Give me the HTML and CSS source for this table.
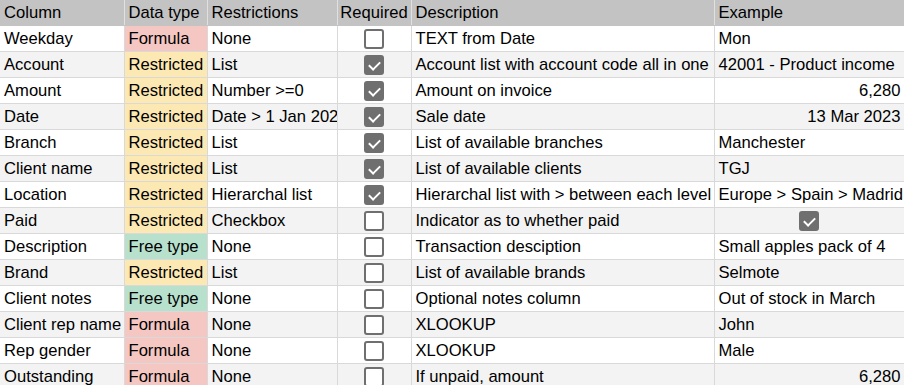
FILE: index.html
```html
<!DOCTYPE html>
<html lang="en">
<head>
    <meta charset="UTF-8">
    <title>Columns</title>
    <link rel="stylesheet" href="styles.css">
</head>
<body>
    <table class="sheet">
        <colgroup>
            <col class="c-col">
            <col class="c-type">
            <col class="c-restr">
            <col class="c-req">
            <col class="c-desc">
            <col class="c-ex">
        </colgroup>
        <thead>
            <tr>
                <th>Column</th>
                <th>Data type</th>
                <th>Restrictions</th>
                <th class="center">Required</th>
                <th>Description</th>
                <th>Example</th>
            </tr>
        </thead>
        <tbody>
            <tr>
                <td>Weekday</td>
                <td class="formula">Formula</td>
                <td>None</td>
                <td class="center"><span class="box"></span></td>
                <td>TEXT from Date</td>
                <td>Mon</td>
            </tr>
            <tr>
                <td>Account</td>
                <td class="restricted">Restricted</td>
                <td>List</td>
                <td class="center"><span class="box checked"></span></td>
                <td>Account list with account code all in one</td>
                <td>42001 - Product income</td>
            </tr>
            <tr>
                <td>Amount</td>
                <td class="restricted">Restricted</td>
                <td>Number &gt;=0</td>
                <td class="center"><span class="box checked"></span></td>
                <td>Amount on invoice</td>
                <td class="num">6,280</td>
            </tr>
            <tr>
                <td>Date</td>
                <td class="restricted">Restricted</td>
                <td>Date &gt; 1 Jan 2023</td>
                <td class="center"><span class="box checked"></span></td>
                <td>Sale date</td>
                <td class="num">13 Mar 2023</td>
            </tr>
            <tr>
                <td>Branch</td>
                <td class="restricted">Restricted</td>
                <td>List</td>
                <td class="center"><span class="box checked"></span></td>
                <td>List of available branches</td>
                <td>Manchester</td>
            </tr>
            <tr>
                <td>Client name</td>
                <td class="restricted">Restricted</td>
                <td>List</td>
                <td class="center"><span class="box checked"></span></td>
                <td>List of available clients</td>
                <td>TGJ</td>
            </tr>
            <tr>
                <td>Location</td>
                <td class="restricted">Restricted</td>
                <td>Hierarchal list</td>
                <td class="center"><span class="box checked"></span></td>
                <td>Hierarchal list with &gt; between each level</td>
                <td>Europe &gt; Spain &gt; Madrid</td>
            </tr>
            <tr>
                <td>Paid</td>
                <td class="restricted">Restricted</td>
                <td>Checkbox</td>
                <td class="center"><span class="box"></span></td>
                <td>Indicator as to whether paid</td>
                <td class="center"><span class="box checked"></span></td>
            </tr>
            <tr>
                <td>Description</td>
                <td class="free">Free type</td>
                <td>None</td>
                <td class="center"><span class="box"></span></td>
                <td>Transaction desciption</td>
                <td>Small apples pack of 4</td>
            </tr>
            <tr>
                <td>Brand</td>
                <td class="restricted">Restricted</td>
                <td>List</td>
                <td class="center"><span class="box"></span></td>
                <td>List of available brands</td>
                <td>Selmote</td>
            </tr>
            <tr>
                <td>Client notes</td>
                <td class="free">Free type</td>
                <td>None</td>
                <td class="center"><span class="box"></span></td>
                <td>Optional notes column</td>
                <td>Out of stock in March</td>
            </tr>
            <tr>
                <td>Client rep name</td>
                <td class="formula">Formula</td>
                <td>None</td>
                <td class="center"><span class="box"></span></td>
                <td>XLOOKUP</td>
                <td>John</td>
            </tr>
            <tr>
                <td>Rep gender</td>
                <td class="formula">Formula</td>
                <td>None</td>
                <td class="center"><span class="box"></span></td>
                <td>XLOOKUP</td>
                <td>Male</td>
            </tr>
            <tr>
                <td>Outstanding</td>
                <td class="formula">Formula</td>
                <td>None</td>
                <td class="center"><span class="box"></span></td>
                <td>If unpaid, amount</td>
                <td class="num">6,280</td>
            </tr>
        </tbody>
    </table>
</body>
</html>
```

FILE: styles.css
```css
* { margin: 0; padding: 0; box-sizing: border-box; }
body { background: #fff; color: #000; font-family: "Liberation Sans", Arial, sans-serif; font-size: 16.6px; overflow: hidden; }

.sheet { width: 904px; table-layout: fixed; border-collapse: collapse; }
.c-col { width: 124px; }
.c-type { width: 83px; }
.c-restr { width: 130px; }
.c-req { width: 74px; }
.c-desc { width: 303px; }
.c-ex { width: 190px; }

.sheet th, .sheet td { border: 1px solid #d9d9d9; padding: 0 3px 0 4px; white-space: nowrap; overflow: hidden; text-align: left; font-weight: normal; vertical-align: middle; }
.sheet th { height: 25px; background: #c3c3c3; border-color: #c3c3c3 #e0e0e0 #c3c3c3 #e0e0e0; }
.sheet td { height: 26px; }
.sheet tbody tr:nth-child(even) td { background: #f3f3f3; }
.sheet thead tr th:first-child, .sheet td:first-child { border-left: none; }

.sheet .center { text-align: center; padding: 0; }
.sheet .num { text-align: right; }
.sheet tbody tr td.formula { background: #f4c7c3; }
.sheet tbody tr td.restricted { background: #fce8b2; }
.sheet tbody tr td.free { background: #b7e1cd; }

.box { display: inline-block; width: 20px; height: 20px; border: 2px solid #6f6f6f; border-radius: 3px; vertical-align: middle; position: relative; background: #fff; }
.box.checked { background: #6f6f6f; }
.box.checked::after { content: ""; position: absolute; left: 5px; top: 2px; width: 5px; height: 9px; border: solid #fff; border-width: 0 2px 2px 0; transform: rotate(45deg); }
```
